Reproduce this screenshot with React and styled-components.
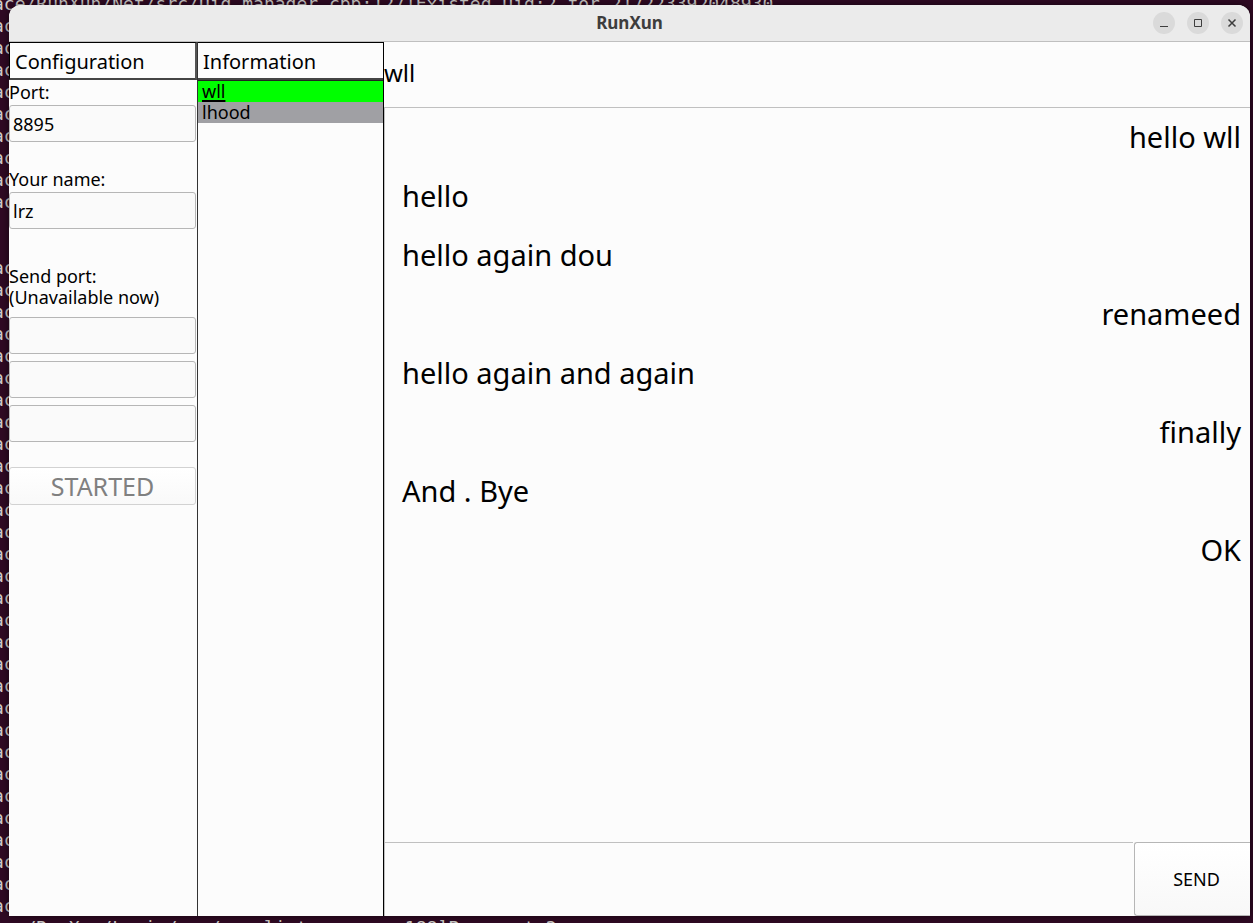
import React from "react";
import styled, { createGlobalStyle } from "styled-components";

const GlobalStyle = createGlobalStyle`
  *, *::before, *::after { box-sizing: border-box; }
  html, body, #root { height: 100%; }
  body {
    margin: 0;
    color: #000;
    background: #300a24;
    font-family: "Noto Sans", "Open Sans", sans-serif;
    overflow: hidden;
  }
  button, input, textarea { font: inherit; color: inherit; }
`;

const Desktop = styled.div`
  position: relative;
  display: flex;
  height: 100%;
  padding: 5px 3px 7px 9px;
  overflow: hidden;
`;

const Terminal = styled.pre`
  position: absolute;
  top: -7px;
  left: -7px;
  margin: 0;
  color: #d0cfcc;
  font: 18px/22px "DejaVu Sans Mono", monospace;
`;

const Window = styled.main`
  position: relative;
  flex: 1;
  min-width: 0;
  display: flex;
  flex-direction: column;
  background: #fcfcfc;
  border-radius: 12px 12px 0 0;
  overflow: hidden;
  box-shadow: 0 0 8px rgba(0, 0, 0, 0.6);
`;

const TitleBar = styled.header`
  flex: none;
  display: grid;
  grid-template-columns: 1fr auto 1fr;
  align-items: center;
  height: 37px;
  padding: 0 7px;
  background: #ebebeb;
  border-bottom: 1px solid #bfbfbf;
`;

const Title = styled.h1`
  grid-column: 2;
  margin: 0;
  color: #3d3d3d;
  font-size: 17px;
  line-height: 26px;
  font-weight: 700;
`;

const WindowControls = styled.div`
  display: flex;
  justify-content: flex-end;
  gap: 12px;
`;

const ControlButton = styled.button`
  display: grid;
  place-items: center;
  width: 22px;
  height: 22px;
  padding: 0;
  border: 0;
  border-radius: 50%;
  background: #dadada;
`;

const Body = styled.div`
  flex: 1;
  min-height: 0;
  display: grid;
  grid-template-columns: 188px 187px 1fr;
`;

const Panel = styled.section`
  display: flex;
  flex-direction: column;
  min-height: 0;
`;

const ContactsPanel = styled(Panel)`
  border-left: 1px solid #333;
  border-right: 1px solid #000;
`;

const PanelTitle = styled.h2`
  flex: none;
  height: 38px;
  margin: 0;
  padding: 0 5px;
  border: solid #000;
  border-width: ${(p) => (p.$boxed ? "1px 2px 2px 1px" : "1px 0 2px")};
  border-right-color: #555;
  border-bottom-color: #444;
  font-size: 20px;
  line-height: 38px;
  font-weight: 400;
`;

const Form = styled.form`
  display: flex;
  flex-direction: column;
  padding: 2px 1px 0 0;
`;

const Field = styled.div`
  display: flex;
  flex-direction: column;
  gap: ${(p) => p.$gap || "2px"};
  margin-bottom: ${(p) => p.$after};
`;

const Label = styled.label`
  font-size: 18px;
  line-height: 21px;
  white-space: pre-line;
`;

const TextInput = styled.input`
  width: 100%;
  height: 37px;
  padding: 1px 3px 0;
  border: 1px solid #b6b6b6;
  border-radius: 3px;
  background: #fafafa;
  font-size: 18px;
  outline: 0;
`;

const PortInputs = styled.div`
  display: flex;
  flex-direction: column;
  gap: 7px;
`;

const StartButton = styled.button`
  height: 38px;
  padding: 0;
  border: 1px solid #d2d2d2;
  border-radius: 3px;
  background: linear-gradient(#fff, #f9f9f9);
  color: #808080;
  font-size: 25px;
  line-height: 36px;
`;

const ContactList = styled.ul`
  margin: 0;
  padding: 0;
  border-top: 1px solid #222;
  list-style: none;
`;

const Contact = styled.button`
  display: block;
  width: 100%;
  height: 21px;
  padding: 0 4px;
  border: 0;
  background: ${(p) => (p.$active ? "#00ff00" : "#a0a0a4")};
  font-size: 18px;
  line-height: 21px;
  text-align: left;
  text-decoration: ${(p) => (p.$active ? "underline" : "none")};
  text-decoration-thickness: 2px;
  text-underline-offset: 2px;
`;

const ChatTitle = styled.h2`
  flex: none;
  height: 65px;
  margin: 0;
  font-size: 24px;
  line-height: 61px;
  font-weight: 400;
`;

const Messages = styled.ol`
  flex: 1;
  min-height: 0;
  margin: 0;
  padding: 0 9px 0 17px;
  border: solid #c0c0c0;
  border-width: 1px 0 0 1px;
  list-style: none;
  overflow: hidden;
`;

const Message = styled.li`
  height: 59px;
  font-size: 29px;
  line-height: 57px;
  text-align: ${(p) => (p.$mine ? "right" : "left")};
`;

const Composer = styled.form`
  flex: none;
  display: grid;
  grid-template-columns: 1fr 116px;
  gap: 1px;
  height: 74px;
`;

const Draft = styled.textarea`
  width: 100%;
  height: 100%;
  padding: 4px;
  border: solid #c0c0c0;
  border-width: 1px 0 0 1px;
  background: transparent;
  font-size: 24px;
  resize: none;
  outline: 0;
`;

const SendButton = styled.button`
  padding: 0 0 0 8px;
  border: solid #b6b6b6;
  border-width: 1px 0 1px 1px;
  border-radius: 3px 0 0 3px;
  background: linear-gradient(#fff, #f8f8f8);
  font-size: 18px;
`;

const tail = "ac\n";
const terminalText =
  "ace/RunXun/Net/src/Uid_manager.cpp:127]Existed Uid:2 for 217223392048930\n" +
  tail.repeat(9) +
  "\n\n" +
  tail.repeat(30) +
  "ace/RunXun/Logic/src/userlist_man.cpp:188]Procount:2";

const contacts = [
  { name: "wll", active: true },
  { name: "lhood", active: false },
];

const messages = [
  { text: "hello wll", mine: true },
  { text: "hello" },
  { text: "hello again dou" },
  { text: "renameed", mine: true },
  { text: "hello again and again" },
  { text: "finally", mine: true },
  { text: "And . Bye" },
  { text: "OK", mine: true },
];

const controls = [
  { label: "Minimize", path: "M1 8.5h8" },
  { label: "Maximize", path: "M1.5 1.5h7v7h-7z" },
  { label: "Close", path: "M1.5 1.5l7 7M8.5 1.5l-7 7", weight: 1.5 },
];

export default function App() {
  return (
    <>
      <GlobalStyle />
      <Desktop>
        <Terminal>{terminalText}</Terminal>
        <Window>
          <TitleBar>
            <Title>RunXun</Title>
            <WindowControls>
              {controls.map((c) => (
                <ControlButton key={c.label} type="button" aria-label={c.label}>
                  <svg
                    width="10"
                    height="10"
                    viewBox="0 0 10 10"
                    fill="none"
                    stroke="#3d3d3d"
                    strokeWidth={c.weight || 1}
                  >
                    <path d={c.path} />
                  </svg>
                </ControlButton>
              ))}
            </WindowControls>
          </TitleBar>
          <Body>
            <Panel>
              <PanelTitle $boxed>Configuration</PanelTitle>
              <Form onSubmit={(e) => e.preventDefault()}>
                <Field $after="27px">
                  <Label htmlFor="port">Port:</Label>
                  <TextInput id="port" defaultValue="8895" />
                </Field>
                <Field $after="37px">
                  <Label htmlFor="name">Your name:</Label>
                  <TextInput id="name" defaultValue="lrz" />
                </Field>
                <Field $gap="9px" $after="25px">
                  <Label htmlFor="send-1">{"Send port:\n(Unavailable now)"}</Label>
                  <PortInputs>
                    <TextInput id="send-1" />
                    <TextInput aria-label="Send port 2" />
                    <TextInput aria-label="Send port 3" />
                  </PortInputs>
                </Field>
                <StartButton disabled>STARTED</StartButton>
              </Form>
            </Panel>
            <ContactsPanel>
              <PanelTitle>Information</PanelTitle>
              <ContactList>
                {contacts.map((c) => (
                  <li key={c.name}>
                    <Contact type="button" $active={c.active}>
                      {c.name}
                    </Contact>
                  </li>
                ))}
              </ContactList>
            </ContactsPanel>
            <Panel>
              <ChatTitle>wll</ChatTitle>
              <Messages>
                {messages.map((m) => (
                  <Message key={m.text} $mine={m.mine}>
                    {m.text}
                  </Message>
                ))}
              </Messages>
              <Composer onSubmit={(e) => e.preventDefault()}>
                <Draft aria-label="Message" />
                <SendButton>SEND</SendButton>
              </Composer>
            </Panel>
          </Body>
        </Window>
      </Desktop>
    </>
  );
}
